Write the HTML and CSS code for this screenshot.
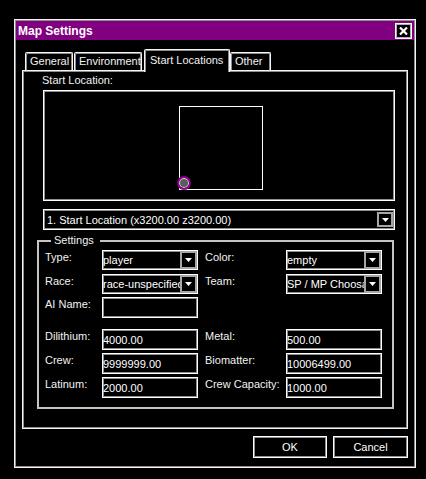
FILE: index.html
```html
<!DOCTYPE html>
<html>
<head>
<meta charset="utf-8">
<title>Map Settings</title>
<link rel="stylesheet" href="styles.css">
</head>
<body>
<div class="dialog">
  <div class="titlebar">
    <span class="title">Map Settings</span>
    <button class="close" type="button" aria-label="Close">
      <svg width="9" height="8" viewBox="0 0 9 8"><path d="M1 0.5 L8 7.5 M8 0.5 L1 7.5" stroke="#fff" stroke-width="2.2" fill="none"/></svg>
    </button>
  </div>

  <div class="tabs">
    <div class="tab tab-general">General</div>
    <div class="tab tab-env">Environment</div>
    <div class="tab tab-start active">Start Locations</div>
    <div class="tab tab-other">Other</div>
  </div>

  <div class="panel">
    <div class="caption">Start Location:</div>
    <div class="map">
      <div class="bounds"></div>
      <div class="marker"></div>
    </div>

    <div class="select wide">
      <span class="value">1. Start Location (x3200.00 z3200.00)</span>
      <span class="arrow"><svg width="7" height="4" viewBox="0 0 7 4"><polygon points="0,0 7,0 3.5,4" fill="#fff"/></svg></span>
    </div>

    <fieldset class="group">
      <legend>Settings</legend>

      <div class="row sel-row first">
        <span class="lbl">Type:</span>
        <div class="select"><span class="value">player</span><span class="arrow"><svg width="7" height="4" viewBox="0 0 7 4"><polygon points="0,0 7,0 3.5,4" fill="#fff"/></svg></span></div>
        <span class="lbl lbl2">Color:</span>
        <div class="select"><span class="value">empty</span><span class="arrow"><svg width="7" height="4" viewBox="0 0 7 4"><polygon points="0,0 7,0 3.5,4" fill="#fff"/></svg></span></div>
      </div>

      <div class="row sel-row">
        <span class="lbl">Race:</span>
        <div class="select"><span class="value">race-unspecified</span><span class="arrow"><svg width="7" height="4" viewBox="0 0 7 4"><polygon points="0,0 7,0 3.5,4" fill="#fff"/></svg></span></div>
        <span class="lbl lbl2">Team:</span>
        <div class="select"><span class="value">SP / MP Choosable</span><span class="arrow"><svg width="7" height="4" viewBox="0 0 7 4"><polygon points="0,0 7,0 3.5,4" fill="#fff"/></svg></span></div>
      </div>

      <div class="row text-row ai">
        <span class="lbl">AI Name:</span>
        <div class="input"></div>
      </div>

      <div class="row text-row res">
        <span class="lbl">Dilithium:</span>
        <div class="input">4000.00</div>
        <span class="lbl lbl2">Metal:</span>
        <div class="input">500.00</div>
      </div>

      <div class="row text-row">
        <span class="lbl">Crew:</span>
        <div class="input">9999999.00</div>
        <span class="lbl lbl2">Biomatter:</span>
        <div class="input">10006499.00</div>
      </div>

      <div class="row text-row">
        <span class="lbl">Latinum:</span>
        <div class="input">2000.00</div>
        <span class="lbl lbl2">Crew Capacity:</span>
        <div class="input">1000.00</div>
      </div>
    </fieldset>
  </div>

  <div class="buttons">
    <button class="btn btn-ok" type="button">OK</button>
    <button class="btn btn-cancel" type="button">Cancel</button>
  </div>
</div>
</body>
</html>
```

FILE: styles.css
```css
html, body {
  margin: 0;
  padding: 0;
  background: #000;
}

body {
  width: 426px;
  height: 479px;
  overflow: hidden;
  font-family: "Liberation Sans", Arial, sans-serif;
  font-size: 11px;
  color: #f2f2f2;
}

/* window frame: white outer line, grey inner line */
.dialog {
  box-sizing: border-box;
  width: 402px;
  height: 449px;
  margin: 19px 0 0 14px;
  padding: 1px;
  border: 1px solid #f4f4f4;
  box-shadow: inset 0 0 0 1px #8e8e8e;
}

.titlebar {
  height: 19px;
  background: #800080;
  display: flex;
  align-items: center;
  justify-content: space-between;
  padding: 0 2px 0 2px;
}

.title {
  font-size: 12px;
  font-weight: bold;
  color: #fff;
}

.close {
  box-sizing: border-box;
  width: 17px;
  height: 16px;
  margin: 0;
  padding: 0;
  background: #000;
  border: 1px solid #fff;
  box-shadow: inset 0 0 0 1px #b0b0b0;
  display: flex;
  align-items: center;
  justify-content: center;
}

/* tab strip */
.tabs {
  display: flex;
  align-items: flex-end;
  height: 21px;
  margin: 9px 0 0 9px;
}

.tab {
  box-sizing: border-box;
  height: 18px;
  border: 1px solid #f4f4f4;
  border-bottom: none;
  border-radius: 2px 2px 0 0;
  box-shadow: inset 1px 1px 0 #8e8e8e, inset -1px 0 0 #8e8e8e;
  padding-left: 4px;
  line-height: 17px;
  white-space: nowrap;
  overflow: hidden;
  color: #f2f2f2;
}

.tab-general { width: 48px; margin-right: 1px; }
.tab-env { width: 68px; margin-right: 2px; }
.tab-other { width: 41px; }

.tab.active {
  position: relative;
  z-index: 1;
  width: 86px;
  height: 23px;
  margin-bottom: -2px;
  padding-left: 5px;
  line-height: 20px;
  background: #000;
  box-shadow: inset 1px 1px 0 #8e8e8e, inset -1px 0 0 #8e8e8e;
}

/* tab page */
.panel {
  box-sizing: border-box;
  height: 359px;
  margin: 0 6px;
  padding: 3px 0 0 19px;
  border: 1px solid #f4f4f4;
  box-shadow: inset 0 0 0 1px #8e8e8e;
}

.caption {
  line-height: 13px;
}

.map {
  position: relative;
  box-sizing: border-box;
  width: 352px;
  height: 111px;
  margin: 3px 0 0 1px;
  border: 1px solid #fff;
  box-shadow: inset 0 0 0 1px #8e8e8e;
}

.bounds {
  position: absolute;
  left: 135px;
  top: 15px;
  width: 84px;
  height: 84px;
  box-sizing: border-box;
  border: 1px solid #fff;
}

.marker {
  position: absolute;
  left: 133px;
  top: 85px;
  width: 14px;
  height: 14px;
  box-sizing: border-box;
  border-radius: 50%;
  border: 2px solid #8a008a;
  background: #5c5c5c;
  box-shadow: inset 0 0 0 1px #d4d4d4;
}

/* dropdowns and text fields */
.select,
.input {
  box-sizing: border-box;
  width: 96px;
  height: 20px;
  border: 1px solid #fff;
  box-shadow: inset 0 0 0 1px #8e8e8e;
  display: flex;
  align-items: center;
  overflow: hidden;
  white-space: nowrap;
  color: #fff;
}

.select .value {
  flex: 1;
  min-width: 0;
  overflow: hidden;
  white-space: nowrap;
}

.arrow {
  flex: none;
  box-sizing: border-box;
  width: 17px;
  height: 18px;
  border: 2px solid #a6a6a6;
  background: #000;
  display: flex;
  align-items: center;
  justify-content: center;
}

.select.wide {
  width: 352px;
  height: 21px;
  margin: 8px 0 0 1px;
}

.select.wide .value {
  padding-left: 3px;
}

.select.wide .arrow {
  width: 16px;
  height: 15px;
  margin-right: 1px;
}

/* "Settings" group box */
.group {
  box-sizing: border-box;
  width: 357px;
  min-width: 0;
  margin: 4px 0 0 -5px;
  padding: 3px 0 9px 6px;
  border: 2px solid #c4c4c4;
}

.group legend {
  margin-left: 6px;
  padding: 0 6px 0 3px;
  line-height: 13px;
  color: #f2f2f2;
}

.row {
  display: flex;
  align-items: flex-start;
  margin-top: 4px;
}

.row.first { margin-top: 0; }
.row.ai { margin-top: 3px; }
.row.res { margin-top: 11px; }
.text-row { margin-top: 3px; }

.text-row .input { height: 21px; }

.lbl {
  flex: none;
  width: 57px;
  line-height: 13px;
  padding-top: 1px;
  white-space: nowrap;
}

.lbl2 {
  width: 81px;
  margin-left: 7px;
}

/* dialog buttons */
.buttons {
  display: flex;
  justify-content: flex-end;
  gap: 6px;
  margin: 7px 6px 0 0;
}

.btn {
  box-sizing: border-box;
  height: 22px;
  margin: 0;
  padding: 0;
  background: #000;
  color: #fff;
  font-family: "Liberation Sans", Arial, sans-serif;
  font-size: 11px;
  border: 1px solid #fff;
  box-shadow: inset 0 0 0 1px #8e8e8e;
}

.btn-ok { width: 74px; }
.btn-cancel { width: 75px; }
```
